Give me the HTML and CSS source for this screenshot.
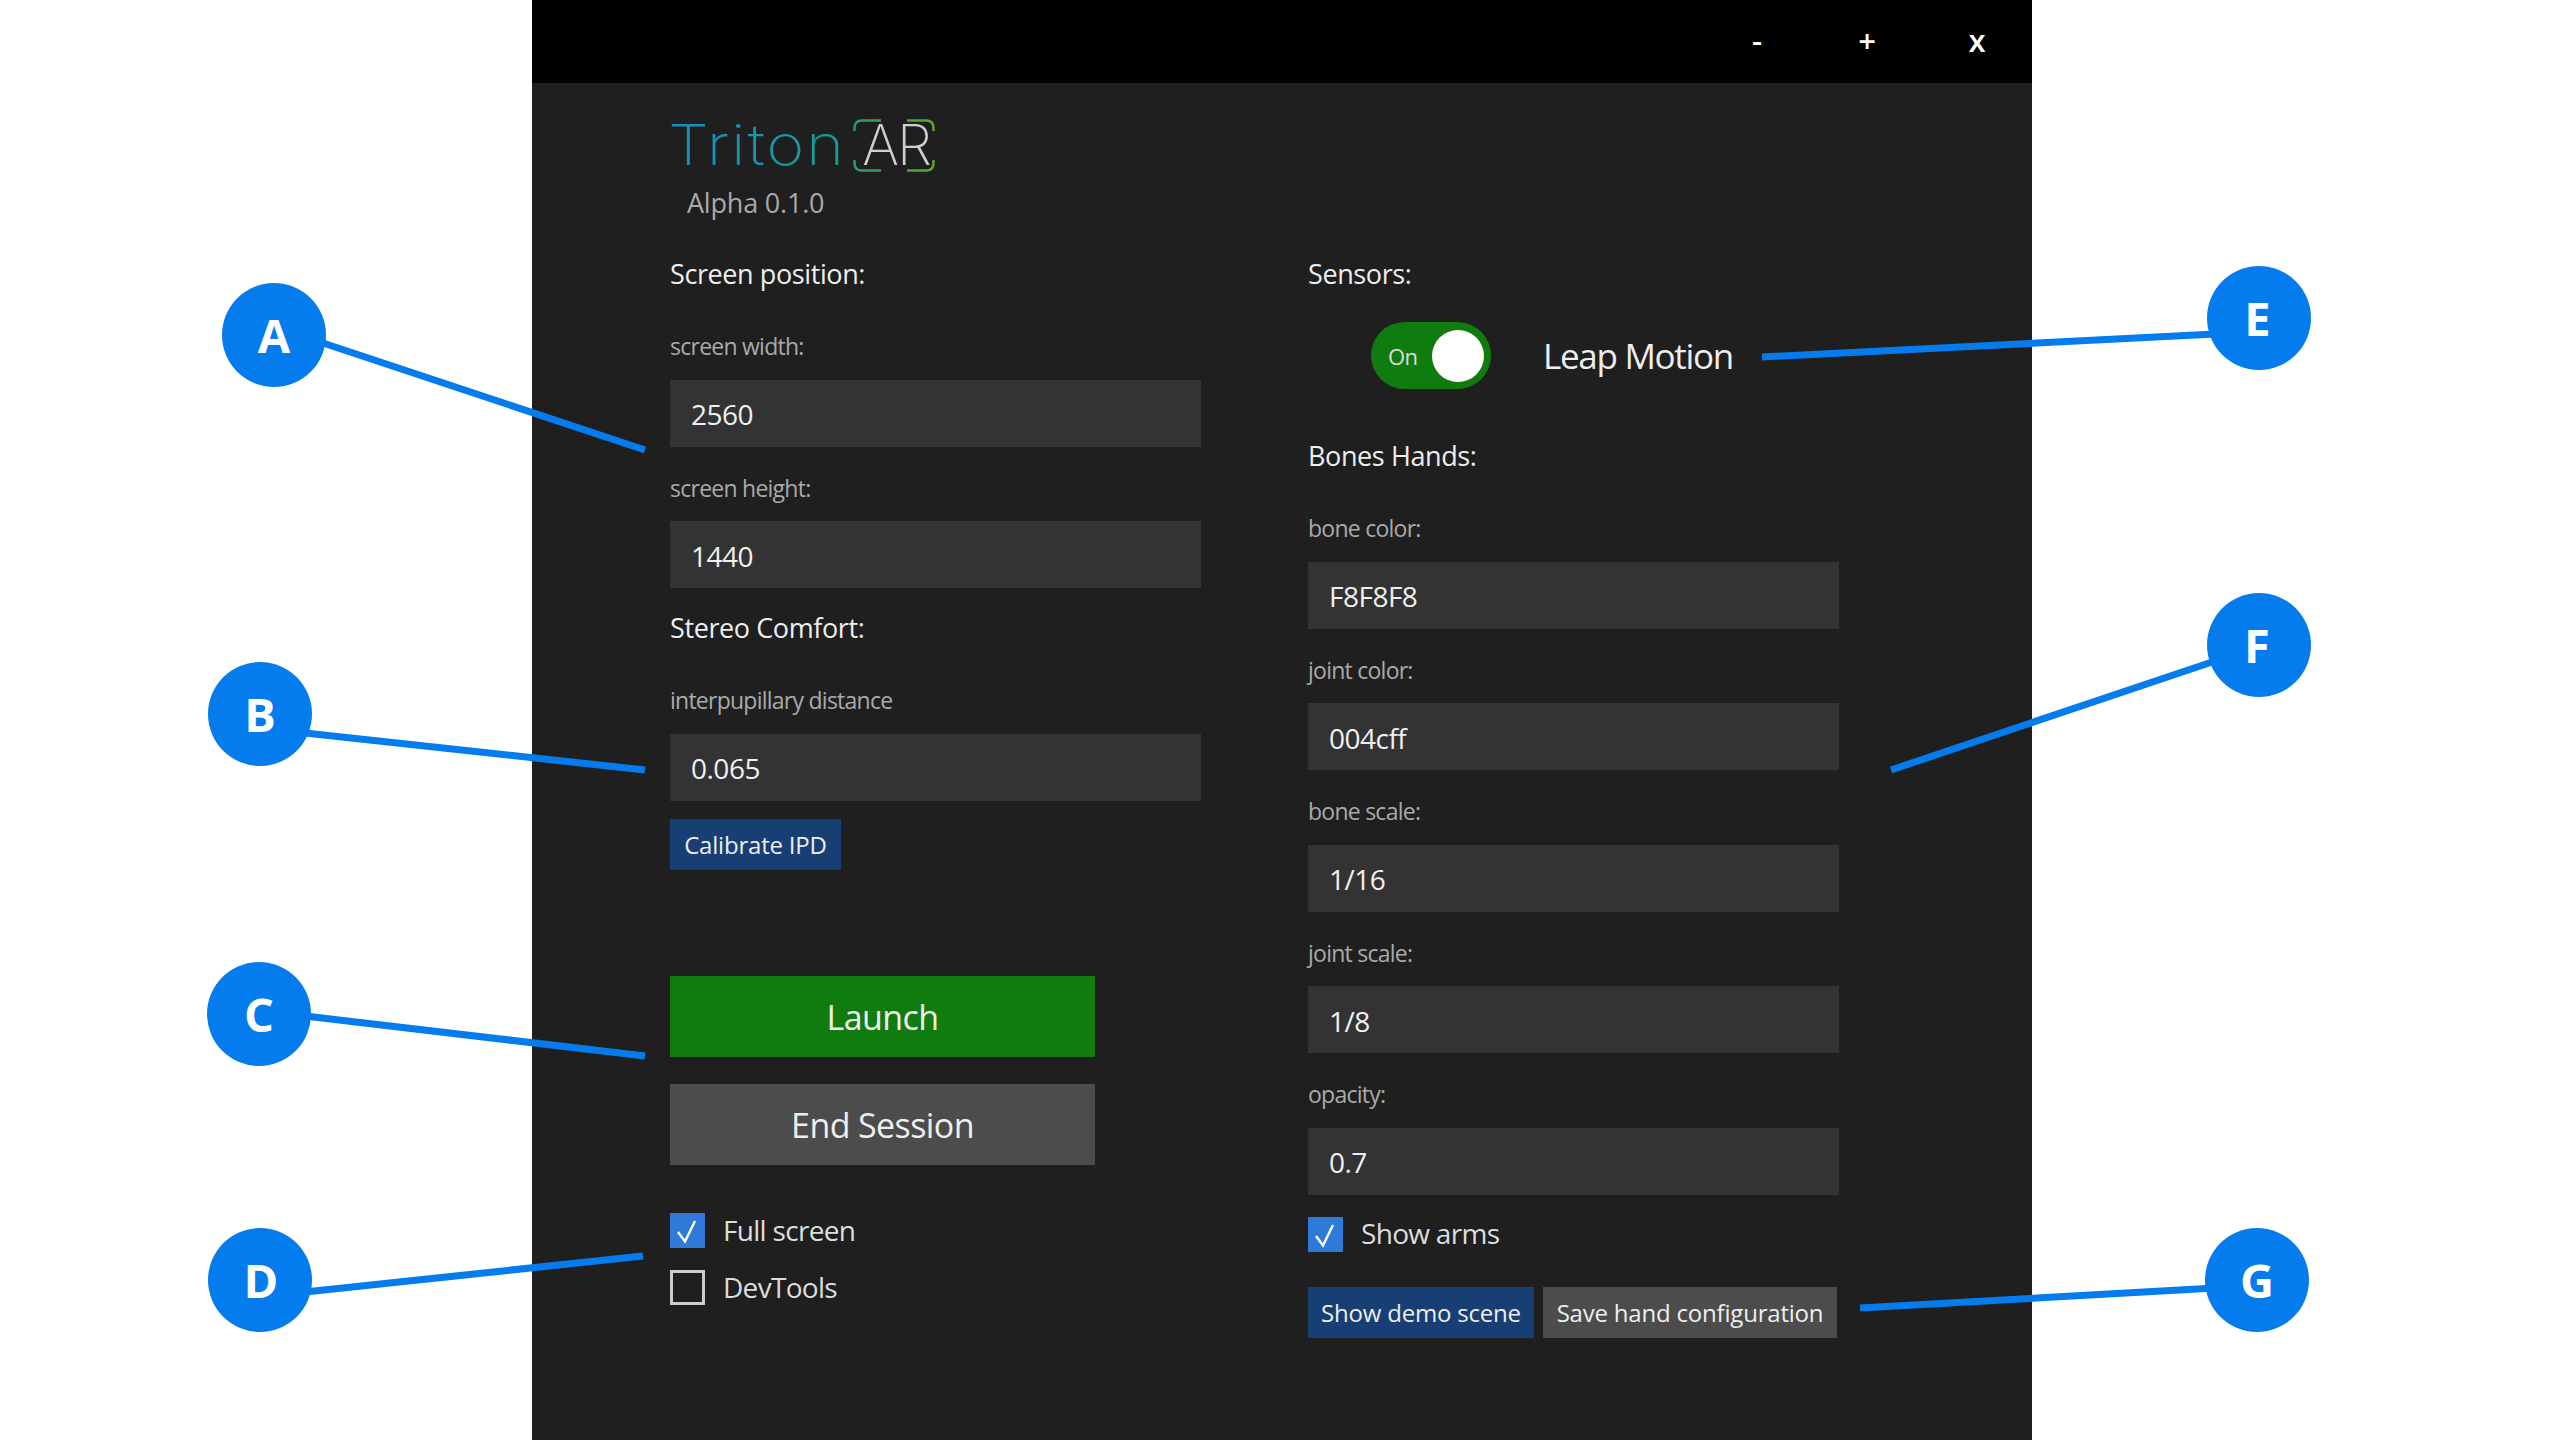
FILE: index.html
```html
<!DOCTYPE html>
<html>
<head>
    <title>Triton AR</title>
    <link rel="stylesheet" href="styles.css">
</head>
<body>
    <div class="window">
        <div class="titlebar">
            <button class="win-btn">-</button>
            <button class="win-btn">+</button>
            <button class="win-btn">x</button>
        </div>
        <div class="content">
            <div class="col col-left">
                <div class="logo">
                    <span class="logo-name">Triton</span>
                    <span class="logo-ar">
                        <svg class="logo-frame" width="82" height="53" viewBox="0 0 82 53">
                            <defs>
                                <linearGradient id="frame" x1="0" x2="1" y1="0" y2="0">
                                    <stop offset="0" stop-color="#2a9a72"/>
                                    <stop offset="1" stop-color="#5fa82c"/>
                                </linearGradient>
                            </defs>
                            <path d="M28 1.5H9Q1.5 1.5 1.5 9V12M54 1.5H73Q80.5 1.5 80.5 9V12M28 51.5H9Q1.5 51.5 1.5 44V41M54 51.5H73Q80.5 51.5 80.5 44V41" fill="none" stroke="url(#frame)" stroke-width="2.4"/>
                        </svg>
                        AR
                    </span>
                </div>
                <div class="version">Alpha 0.1.0</div>

                <h2 class="section section-first">Screen position:</h2>
                <div class="field field-first">
                    <label>screen width:</label>
                    <input type="text" value="2560">
                </div>
                <div class="field">
                    <label>screen height:</label>
                    <input type="text" value="1440">
                </div>

                <h2 class="section section-stereo">Stereo Comfort:</h2>
                <div class="field field-first">
                    <label>interpupillary distance</label>
                    <input type="text" value="0.065">
                </div>
                <button class="btn-small btn-blue btn-calibrate">Calibrate IPD</button>

                <button class="btn-big btn-launch">Launch</button>
                <button class="btn-big btn-end">End Session</button>

                <div class="check check-full">
                    <span class="box box-on"><svg width="35" height="35" viewBox="0 0 35 35"><path d="M8 19L15 28.5L25 8" fill="none" stroke="#fff" stroke-width="2.4"/></svg></span>
                    <span class="check-text">Full screen</span>
                </div>
                <div class="check check-dev">
                    <span class="box"></span>
                    <span class="check-text">DevTools</span>
                </div>
            </div>

            <div class="col col-right">
                <h2 class="section">Sensors:</h2>
                <div class="sensor">
                    <div class="toggle">
                        <span class="toggle-label">On</span>
                        <span class="toggle-knob"></span>
                    </div>
                    <span class="sensor-name">Leap Motion</span>
                </div>

                <h2 class="section section-bones">Bones Hands:</h2>
                <div class="field field-first">
                    <label>bone color:</label>
                    <input type="text" value="F8F8F8">
                </div>
                <div class="field">
                    <label>joint color:</label>
                    <input type="text" value="004cff">
                </div>
                <div class="field">
                    <label>bone scale:</label>
                    <input type="text" value="1/16">
                </div>
                <div class="field">
                    <label>joint scale:</label>
                    <input type="text" value="1/8">
                </div>
                <div class="field">
                    <label>opacity:</label>
                    <input type="text" value="0.7">
                </div>

                <div class="check check-arms">
                    <span class="box box-on"><svg width="35" height="35" viewBox="0 0 35 35"><path d="M8 19L15 28.5L25 8" fill="none" stroke="#fff" stroke-width="2.4"/></svg></span>
                    <span class="check-text">Show arms</span>
                </div>
                <div class="button-row">
                    <button class="btn-small btn-blue btn-demo">Show demo scene</button>
                    <button class="btn-small btn-grey btn-save">Save hand configuration</button>
                </div>
            </div>
        </div>
    </div>

    <!-- callouts sit on top of the screenshot -->
    <svg class="callout-lines" width="2560" height="1440" viewBox="0 0 2560 1440">
        <g stroke="#057ced" stroke-width="7">
            <line x1="320" y1="342" x2="645" y2="450"/>
            <line x1="305" y1="733" x2="645" y2="770"/>
            <line x1="305" y1="1016" x2="645" y2="1056"/>
            <line x1="305" y1="1292" x2="643" y2="1256"/>
            <line x1="1762" y1="357" x2="2215" y2="334"/>
            <line x1="1891" y1="770" x2="2215" y2="661"/>
            <line x1="1860" y1="1308" x2="2215" y2="1288"/>
        </g>
    </svg>
    <div class="callout callout-a">A</div>
    <div class="callout callout-b">B</div>
    <div class="callout callout-c">C</div>
    <div class="callout callout-d">D</div>
    <div class="callout callout-e">E</div>
    <div class="callout callout-f">F</div>
    <div class="callout callout-g">G</div>
</body>
</html>
```

FILE: styles.css
```css
* {
    box-sizing: border-box;
}
html, body {
    margin: 0;
    height: 1440px;
    overflow: hidden;
}
body {
    position: relative;
    background-color: white;
    font-family: 'Open Sans', 'Noto Sans', sans-serif;
}
.window {
    width: 1500px;
    height: 1440px;
    margin-left: 532px;
    background-color: #1f1f1f;
    color: #eee;
}
.titlebar {
    height: 83px;
    padding-bottom: 3px;
    background-color: black;
    display: flex;
    justify-content: flex-end;
    align-items: center;
}
.win-btn {
    width: 110px;
    background: none;
    color: white;
    font-size: 31px;
    font-weight: 600;
    line-height: 40px;
    text-align: center;
}
.content {
    display: flex;
    gap: 107px;
    padding-left: 138px;
}
.col {
    width: 531px;
}
.col-right {
    padding-top: 171px;
}

/* logo */
.logo {
    display: flex;
    margin-top: 36px;
    height: 53px;
    gap: 8px;
}
.logo-name {
    font-family: 'Inter', sans-serif;
    font-weight: 200;
    font-size: 56px;
    line-height: 53px;
    letter-spacing: 1.5px;
    width: 175px;
    white-space: nowrap;
    margin-left: -2px;
    margin-right: 2px;
    transform: scaleX(1.16);
    transform-origin: left center;
    background: linear-gradient(90deg, #1a8cc4, #14a08c);
    -webkit-background-clip: text;
    background-clip: text;
    color: transparent;
}
.logo-ar {
    position: relative;
    width: 82px;
    font-family: 'Inter', sans-serif;
    font-weight: 200;
    font-size: 56px;
    line-height: 53px;
    text-align: center;
    letter-spacing: -2px;
    padding-left: 4px;
    color: #cfcfcf;
}
.logo-frame {
    position: absolute;
    left: 0;
    top: 0;
}
.version {
    margin: 11px 0 0 17px;
    font-size: 27px;
    font-weight: 500;
    line-height: 40px;
    color: #aaa;
    letter-spacing: -0.2px;
}

/* sections and fields */
.section {
    margin: 0;
    font-size: 27px;
    font-weight: 500;
    line-height: 40px;
    letter-spacing: -0.4px;
    color: #eee;
}
.section-first {
    margin-top: 31px;
}
.section-stereo {
    margin-top: 20px;
}
.section-bones {
    margin-top: 47px;
}
.field {
    margin-top: 23px;
}
.field-first {
    margin-top: 34px;
}
.field label {
    display: block;
    font-size: 23px;
    line-height: 36px;
    color: #aaa;
    letter-spacing: -0.75px;
}
.field input {
    display: block;
    width: 531px;
    height: 67px;
    margin-top: 15.5px;
    padding: 2px 0 0 21px;
    background-color: #333;
    border: none;
    color: #f0f0f0;
    font-family: inherit;
    font-size: 28px;
    font-weight: 500;
    letter-spacing: -0.5px;
}

/* buttons */
button {
    font-family: inherit;
    border: none;
    padding: 0;
    display: block;
}
.btn-small {
    height: 51px;
    font-size: 24px;
    letter-spacing: -0.2px;
    color: #eee;
}
.btn-blue {
    background-color: #173f73;
}
.btn-grey {
    background-color: #4c4c4c;
}
.btn-calibrate {
    width: 171px;
    margin-top: 18px;
}
.btn-big {
    width: 425px;
    height: 81px;
    padding-top: 2px;
    font-size: 34px;
    letter-spacing: -0.6px;
    color: #eee;
}
.btn-launch {
    margin-top: 106px;
    background-color: #107c10;
}
.btn-end {
    margin-top: 27px;
    background-color: #4c4c4c;
}
.button-row {
    display: flex;
    gap: 9px;
    margin-top: 35px;
}
.btn-demo {
    width: 226px;
}
.btn-save {
    width: 294px;
}

/* checkboxes */
.check {
    display: flex;
    align-items: center;
    gap: 18px;
    height: 36px;
    font-size: 28px;
    letter-spacing: -0.7px;
    color: #ddd;
}
.check-text {
    margin-top: -2px;
}
.check-full {
    margin-top: 48px;
}
.check-dev {
    margin-top: 21px;
}
.check-arms {
    margin-top: 21.5px;
}
.box {
    width: 35px;
    height: 35px;
    border: 3px solid #ccc;
}
.box-on {
    border: none;
    background-color: #2d7ad9;
}
.box svg {
    display: block;
}

/* toggle */
.sensor {
    display: flex;
    align-items: center;
    gap: 52px;
    margin-top: 28px;
    padding-left: 63px;
}
.toggle {
    width: 120px;
    height: 67px;
    border-radius: 34px;
    background-color: #107c10;
    display: flex;
    align-items: center;
    justify-content: space-between;
    padding: 0 7px 0 17px;
}
.toggle-label {
    font-size: 22px;
    letter-spacing: -0.5px;
    color: #ddd;
}
.toggle-knob {
    width: 52px;
    height: 52px;
    border-radius: 50%;
    background-color: white;
}
.sensor-name {
    font-size: 35px;
    letter-spacing: -1.3px;
    color: #eee;
}

/* callouts */
.callout-lines {
    position: absolute;
    left: 0;
    top: 0;
}
.callout {
    position: absolute;
    width: 104px;
    height: 104px;
    border-radius: 50%;
    background-color: #057ced;
    color: white;
    font-size: 47px;
    font-weight: 700;
    display: flex;
    align-items: center;
    justify-content: center;
}
.callout-a { left: 222px; top: 283px; }
.callout-b { left: 208px; top: 662px; }
.callout-c { left: 207px; top: 962px; }
.callout-d { left: 208px; top: 1228px; padding-left: 2px; }
.callout-e { left: 2207px; top: 266px; padding-right: 3px; }
.callout-f { left: 2207px; top: 593px; padding-right: 4px; }
.callout-g { left: 2205px; top: 1228px; }
```
